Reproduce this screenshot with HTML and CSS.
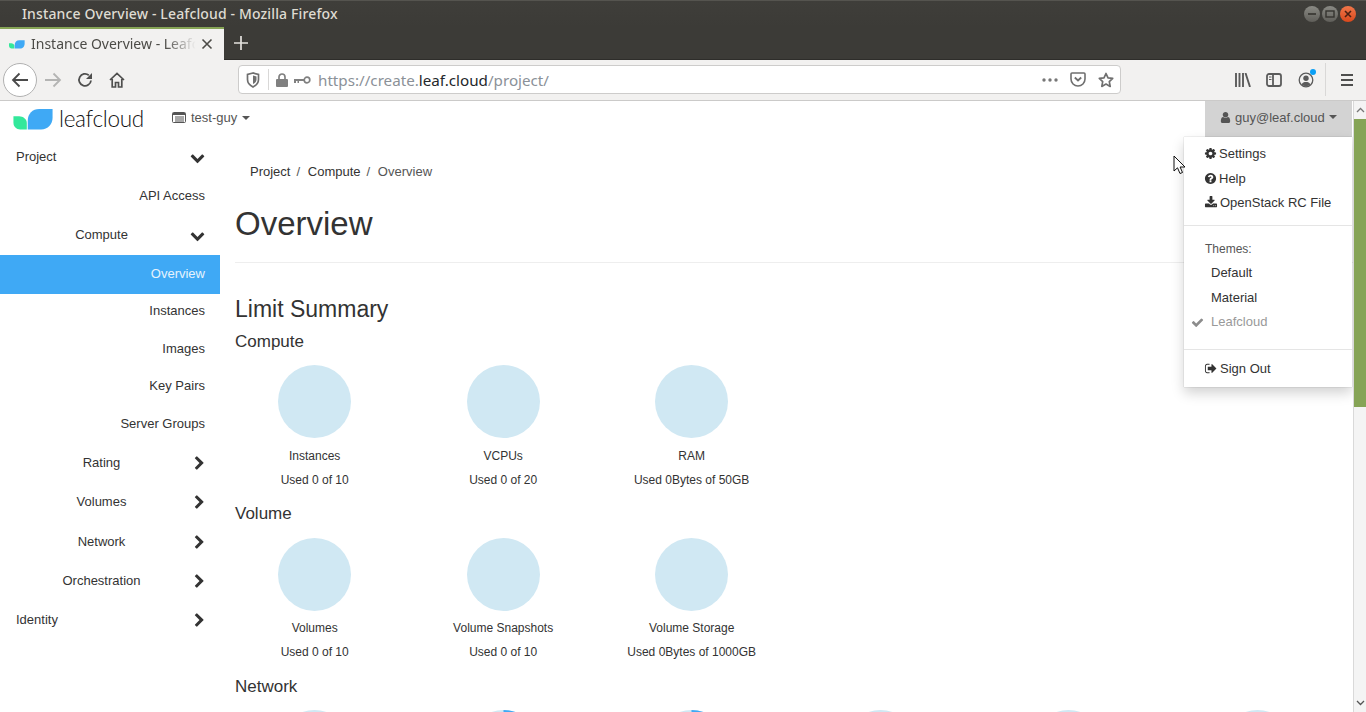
FILE: index.html
```html
<!DOCTYPE html>
<html lang="en">
<head>
<meta charset="utf-8">
<title>Instance Overview - Leafcloud - Mozilla Firefox</title>
<link rel="stylesheet" href="styles.css">
</head>
<body>
<svg class="defs" width="0" height="0">
  <defs>
    <symbol id="i-down" viewBox="0 0 1792 1792"><path d="M1683 808l-742 741q-19 19-45 19t-45-19l-742-741q-19-19-19-45.5t19-45.5l166-165q19-19 45-19t45 19l531 531 531-531q19-19 45-19t45 19l166 165q19 19 19 45.5t-19 45.5z"/></symbol>
    <symbol id="i-right" viewBox="0 0 1792 1792"><path d="M1363 877l-742 742q-19 19-45 19t-45-19l-166-166q-19-19-19-45t19-45l531-531-531-531q-19-19-19-45t19-45l166-166q19-19 45-19t45 19l742 742q19 19 19 45t-19 45z"/></symbol>
    <symbol id="i-user" viewBox="0 0 1792 1792"><path d="M1536 1399q0 109-62.5 187t-150.5 78h-854q-88 0-150.5-78t-62.5-187q0-85 8.5-160.5t31.5-152 58.5-131 94-89 134.5-34.5q131 128 313 128t313-128q76 0 134.5 34.5t94 89 58.5 131 31.5 152 8.5 160.5zm-256-887q0 159-112.5 271.5t-271.5 112.5-271.5-112.5-112.5-271.5 112.5-271.5 271.5-112.5 271.5 112.5 112.5 271.5z"/></symbol>
    <symbol id="i-check" viewBox="0 0 1792 1792"><path d="M1671 566q0 40-28 68l-724 724-136 136q-28 28-68 28t-68-28l-136-136-362-362q-28-28-28-68t28-68l136-136q28-28 68-28t68 28l294 295 656-657q28-28 68-28t68 28l136 136q28 28 28 68z"/></symbol>
    <symbol id="i-help" viewBox="0 0 1792 1792"><path d="M1024 1376v-192q0-14-9-23t-23-9h-192q-14 0-23 9t-9 23v192q0 14 9 23t23 9h192q14 0 23-9t9-23zm256-672q0-88-55.5-163t-138.5-116-170-41q-243 0-371 213-15 24 8 42l132 100q7 6 19 6 16 0 25-12 53-68 86-92 34-24 86-24 48 0 85.5 26t37.5 59q0 38-20 61t-68 45q-63 28-115.5 86.5t-52.5 125.5v36q0 14 9 23t23 9h192q14 0 23-9t9-23q0-19 21.5-49.5t54.5-49.5q32-18 49-28.5t46-35 44.5-48 28-60.5 12.5-81zm384 192q0 209-103 385.5t-279.5 279.5-385.5 103-385.5-103-279.5-279.5-103-385.5 103-385.5 279.5-279.5 385.5-103 385.5 103 279.5 279.5 103 385.5z"/></symbol>
    <symbol id="i-cog" viewBox="0 0 1792 1792"><path d="M1152 896q0-106-75-181t-181-75-181 75-75 181 75 181 181 75 181-75 75-181zm512-109v222q0 12-8 23t-20 13l-185 28q-19 54-39 91 35 50 107 138 10 12 10 25t-9 23q-27 37-99 108t-94 71q-12 0-26-9l-138-108q-44 23-91 38-16 136-29 186-7 28-36 28h-222q-14 0-24.5-8.5t-11.5-21.5l-28-184q-49-16-90-37l-141 107q-10 9-25 9-14 0-25-11-126-114-165-168-7-10-7-23 0-12 8-23 15-21 51-66.5t54-70.5q-27-50-41-99l-183-27q-13-2-21-12.5t-8-23.5v-222q0-12 8-23t19-13l186-28q14-46 39-92-40-57-107-138-10-12-10-24 0-10 9-23 26-36 98.5-107.5t94.5-71.5q13 0 26 10l138 107q44-23 91-38 16-136 29-186 7-28 36-28h222q14 0 24.5 8.5t11.5 21.5l28 184q49 16 90 37l142-107q9-9 24-9 13 0 25 10 129 119 165 170 7 8 7 22 0 12-8 23-15 21-51 66.5t-54 70.5q26 50 41 98l183 28q13 2 21 12.5t8 23.5z"/></symbol>
    <symbol id="i-download" viewBox="0 0 1792 1792"><path d="M1344 1344q0-26-19-45t-45-19-45 19-19 45 19 45 45 19 45-19 19-45zm256 0q0-26-19-45t-45-19-45 19-19 45 19 45 45 19 45-19 19-45zm128-224v320q0 40-28 68t-68 28h-1472q-40 0-68-28t-28-68v-320q0-40 28-68t68-28h465l135 136q58 56 136 56t136-56l136-136h464q40 0 68 28t28 68zm-325-569q17 41-14 70l-448 448q-18 19-45 19t-45-19l-448-448q-31-29-14-70 17-39 59-39h256v-448q0-26 19-45t45-19h256q26 0 45 19t19 45v448h256q42 0 59 39z"/></symbol>
    <symbol id="i-signout" viewBox="0 0 1792 1792"><path d="M704 1440q0 4 1 20t.5 26.5-3 23.5-10 19.5-20.5 6.5h-320q-119 0-203.5-84.5t-84.5-203.5v-704q0-119 84.5-203.5t203.5-84.5h320q13 0 22.5 9.5t9.5 22.5q0 4 1 20t.5 26.5-3 23.5-10 19.5-20.5 6.5h-320q-66 0-113 47t-47 113v704q0 66 47 113t113 47h312l11.5 1 11.5 3 8 5.5 7 9 2 13.5zm928-544q0 26-19 45l-544 544q-19 19-45 19t-45-19-19-45v-288h-448q-26 0-45-19t-19-45v-384q0-26 19-45t45-19h448v-288q0-26 19-45t45-19 45 19l544 544q19 19 19 45z"/></symbol>
    <symbol id="i-leaf" viewBox="0 0 42 22"><path fill="#33e89b" d="M0 7.500h6c4 0 8 3 8 7v7H7c-4 0-7-3-7-7z"/><path fill="#3fa9f5" d="M15 21.500V12C15 5 20 0 27 0h14v9c0 7-5 12.500-12 12.500z"/></symbol>
  </defs>
</svg>

<header class="titlebar">
  <span class="title-text">Instance Overview - Leafcloud - Mozilla Firefox</span>
  <div class="winbtns">
    <span class="winbtn"><svg width="16" height="16" viewBox="0 0 16 16"><path d="M4 8h8" stroke="#35342f" stroke-width="1.6"/></svg></span>
    <span class="winbtn"><svg width="16" height="16" viewBox="0 0 16 16"><rect x="4" y="5" width="8" height="6" fill="none" stroke="#35342f" stroke-width="1.4"/></svg></span>
    <span class="winbtn winbtn-close"><svg width="16" height="16" viewBox="0 0 16 16"><path d="M5 5l6 6M11 5l-6 6" stroke="#4a2013" stroke-width="1.6"/></svg></span>
  </div>
</header>

<div class="tabbar">
  <div class="tab">
    <svg class="tab-icon" width="16" height="9"><use href="#i-leaf"/></svg>
    <span class="tab-label">Instance Overview - Leafc</span>
    <svg class="tab-close" width="12" height="12" viewBox="0 0 12 12"><path d="M1.5 1.5l9 9M10.5 1.5l-9 9" stroke="#4c4b47" stroke-width="1.6"/></svg>
  </div>
  <svg class="newtab" width="14" height="14" viewBox="0 0 14 14"><path d="M7 0v14M0 7h14" stroke="#e4e2dd" stroke-width="1.7"/></svg>
</div>

<div class="toolbar">
  <span class="backbtn"><svg width="18" height="16" viewBox="0 0 18 16"><path d="M8.5 1.5L2 8l6.500 6.500M2 8h15" fill="none" stroke="#4a4a4a" stroke-width="1.800"/></svg></span>
  <svg class="tb-fwd" width="18" height="16" viewBox="0 0 18 16"><path d="M9.500 1.500L16 8l-6.500 6.500M16 8H1" fill="none" stroke="#b4b4b3" stroke-width="1.800"/></svg>
  <svg class="tb-reload" width="16" height="16" viewBox="0 0 16 16"><path d="M14 8.500A6 6 0 1 1 11.800 3.200" fill="none" stroke="#4f4f4e" stroke-width="1.800"/><path d="M15 1v6H9z" fill="#4f4f4e"/></svg>
  <svg class="tb-home" width="16" height="16" viewBox="0 0 16 16"><path d="M1 8l7-6.500L15 8M3.200 7v8h3.300v-4.500h3V15h3.300V7" fill="none" stroke="#4f4f4e" stroke-width="1.700"/></svg>
  <div class="urlbar">
    <svg class="ub-shield" width="14" height="16" viewBox="0 0 14 16"><path d="M7 1L1.500 2.500v5c0 3.500 2.500 6 5.500 7.500 3-1.500 5.500-4 5.500-7.500v-5z" fill="none" stroke="#6f6f6f" stroke-width="1.700"/><path d="M7 3.500l3.500 1v3c0 2-1.500 3.500-3.500 4.500z" fill="#6f6f6f"/></svg>
    <span class="ub-sep"></span>
    <svg class="ub-lock" width="12" height="14" viewBox="0 0 12 14"><path d="M3 6V4a3 3 0 0 1 6 0v2" fill="none" stroke="#808080" stroke-width="1.700"/><rect x="0" y="6" width="12" height="8" rx="1" fill="#808080"/></svg>
    <svg class="ub-key" width="17" height="8" viewBox="0 0 17 8"><circle cx="13" cy="4" r="2.800" fill="none" stroke="#808080" stroke-width="1.700"/><path d="M0 3h10v2H5v2H3.500V5H2v2H0z" fill="#808080"/></svg>
    <span class="url"><span class="url-dim">https://create.</span><span class="url-host">leaf.cloud</span><span class="url-dim">/project/</span></span>
    <svg class="ub-dots" width="16" height="4" viewBox="0 0 16 4"><circle cx="2" cy="2" r="1.700"/><circle cx="8" cy="2" r="1.700"/><circle cx="14" cy="2" r="1.700"/></svg>
    <svg class="ub-pocket" width="16" height="15" viewBox="0 0 16 15"><path d="M2 1h12a1 1 0 0 1 1 1v5a7 7 0 0 1-14 0V2a1 1 0 0 1 1-1z" fill="none" stroke="#6f6f6f" stroke-width="1.600"/><path d="M4.800 5.500L8 8.500l3.200-3" fill="none" stroke="#6f6f6f" stroke-width="1.800"/></svg>
    <svg class="ub-star" width="16" height="16" viewBox="0 0 16 16"><path d="M8 1.500l2 4.300 4.700.6-3.400 3.300.9 4.700L8 12.100l-4.200 2.300.9-4.700L1.300 6.400 6 5.800z" fill="none" stroke="#6f6f6f" stroke-width="1.700" stroke-linejoin="round"/></svg>
  </div>
  <svg class="tb-lib" width="16" height="14" viewBox="0 0 16 14"><path d="M1 0v14M4.500 0v14M8 0v14M10.500 0l4.500 14" stroke="#5b5b5b" stroke-width="1.900" fill="none"/></svg>
  <svg class="tb-side" width="16" height="14" viewBox="0 0 16 14"><rect x="1" y="1" width="14" height="12" rx="2" fill="none" stroke="#5b5b5b" stroke-width="1.800"/><path d="M7 1v12" stroke="#5b5b5b" stroke-width="1.800"/><path d="M3 4h2.500M3 6.500h2.500" stroke="#5b5b5b" stroke-width="1.200"/></svg>
  <span class="tb-acct">
    <svg width="16" height="16" viewBox="0 0 16 16"><circle cx="8" cy="8" r="6.800" fill="none" stroke="#5b5b5b" stroke-width="1.300"/><circle cx="8" cy="6.300" r="2.700" fill="#5b5b5b"/><path d="M3.600 12.500C4.500 10.500 6 10 8 10s3.500.5 4.400 2.500a6.500 6.500 0 0 1-8.800 0z" fill="#5b5b5b"/></svg>
    <i class="acct-dot"></i>
  </span>
  <span class="tb-sep"></span>
  <svg class="tb-menu" width="14" height="12" viewBox="0 0 14 12"><path d="M1 1h12M1 6h12M1 11h12" stroke="#4f4f4e" stroke-width="1.900"/></svg>
</div>

<div class="viewport">
  <div class="page">
    <nav class="topnav">
      <a class="brand"><svg class="brand-mark" width="41" height="21"><use href="#i-leaf"/></svg><span class="brand-text">leafcloud</span></a>
      <a class="picker">
        <svg class="picker-icon" width="14" height="11" viewBox="0 0 14 11"><rect x=".5" y=".5" width="13" height="10" rx="1" fill="none" stroke="#555"/><path d="M1 1h12v2H1zM3 4.500h9v1H3zM3 6.500h9v1H3zM3 8.500h9v1H3z" fill="#555"/></svg>
        test-guy<i class="caret"></i>
      </a>
      <a class="userbtn"><svg class="fa fa-user" width="13" height="13"><use href="#i-user"/></svg>guy@leaf.cloud<i class="caret"></i></a>
    </nav>

    <div class="columns">
      <aside class="sidebar">
        <div class="nav-row nav-top"><span class="nav-label">Project</span><svg class="chev" width="15" height="15"><use href="#i-down"/></svg></div>
        <div class="nav-row nav-leaf">API Access</div>
        <div class="nav-row nav-mid"><span class="nav-label">Compute</span><svg class="chev" width="15" height="15"><use href="#i-down"/></svg></div>
        <div class="nav-sub nav-active">Overview</div>
        <div class="nav-sub">Instances</div>
        <div class="nav-sub">Images</div>
        <div class="nav-sub">Key Pairs</div>
        <div class="nav-sub">Server Groups</div>
        <div class="nav-row nav-mid nav-after-sub"><span class="nav-label">Rating</span><svg class="chev chev-right" width="15" height="15"><use href="#i-right"/></svg></div>
        <div class="nav-row nav-mid"><span class="nav-label">Volumes</span><svg class="chev chev-right" width="15" height="15"><use href="#i-right"/></svg></div>
        <div class="nav-row nav-mid nav-gap"><span class="nav-label">Network</span><svg class="chev chev-right" width="15" height="15"><use href="#i-right"/></svg></div>
        <div class="nav-row nav-mid"><span class="nav-label">Orchestration</span><svg class="chev chev-right" width="15" height="15"><use href="#i-right"/></svg></div>
        <div class="nav-row nav-top"><span class="nav-label">Identity</span><svg class="chev chev-right" width="15" height="15"><use href="#i-right"/></svg></div>
      </aside>

      <main class="main">
        <ol class="crumbs"><li>Project</li><li>Compute</li><li class="crumb-now">Overview</li></ol>
        <h1 class="page-title">Overview</h1>
        <hr class="rule">
        <h2 class="limit-title">Limit Summary</h2>
        <h3 class="group-title">Compute</h3>
        <div class="charts">
          <div class="chart"><svg width="73" height="73"><circle cx="36.500" cy="36.500" r="36.500"/></svg><div class="chart-name">Instances</div><div class="chart-used">Used 0 of 10</div></div>
          <div class="chart"><svg width="73" height="73"><circle cx="36.500" cy="36.500" r="36.500"/></svg><div class="chart-name">VCPUs</div><div class="chart-used">Used 0 of 20</div></div>
          <div class="chart"><svg width="73" height="73"><circle cx="36.500" cy="36.500" r="36.500"/></svg><div class="chart-name">RAM</div><div class="chart-used">Used 0Bytes of 50GB</div></div>
        </div>
        <h3 class="group-title group-next">Volume</h3>
        <div class="charts charts-tight">
          <div class="chart"><svg width="73" height="73"><circle cx="36.500" cy="36.500" r="36.500"/></svg><div class="chart-name">Volumes</div><div class="chart-used">Used 0 of 10</div></div>
          <div class="chart"><svg width="73" height="73"><circle cx="36.500" cy="36.500" r="36.500"/></svg><div class="chart-name">Volume Snapshots</div><div class="chart-used">Used 0 of 10</div></div>
          <div class="chart"><svg width="73" height="73"><circle cx="36.500" cy="36.500" r="36.500"/></svg><div class="chart-name">Volume Storage</div><div class="chart-used">Used 0Bytes of 1000GB</div></div>
        </div>
        <h3 class="group-title group-next group-net">Network</h3>
        <div class="charts charts-last">
          <div class="chart"><svg width="73" height="73"><circle cx="36.500" cy="36.500" r="36.500"/></svg></div>
          <div class="chart"><svg width="73" height="73"><circle cx="36.500" cy="36.500" r="36.500"/><path class="wedge" d="M36.500 36.500V0A36.500 36.500 0 0 1 73 36.500z"/></svg></div>
          <div class="chart"><svg width="73" height="73"><circle cx="36.500" cy="36.500" r="36.500"/><path class="wedge" d="M36.500 36.500V0A36.500 36.500 0 0 1 73 36.500z"/></svg></div>
          <div class="chart"><svg width="73" height="73"><circle cx="36.500" cy="36.500" r="36.500"/></svg></div>
          <div class="chart"><svg width="73" height="73"><circle cx="36.500" cy="36.500" r="36.500"/></svg></div>
          <div class="chart"><svg width="73" height="73"><circle cx="36.500" cy="36.500" r="36.500"/></svg></div>
        </div>
      </main>
    </div>

    <div class="usermenu">
      <div class="menu-group menu-first">
        <div class="menu-item"><svg class="fa" width="13" height="13"><use href="#i-cog"/></svg>Settings</div>
        <div class="menu-item"><svg class="fa" width="13" height="13"><use href="#i-help"/></svg>Help</div>
        <div class="menu-item"><svg class="fa fa-wide" width="14" height="13"><use href="#i-download"/></svg>OpenStack RC File</div>
      </div>
      <div class="menu-group menu-themes">
        <div class="menu-head">Themes:</div>
        <div class="menu-theme">Default</div>
        <div class="menu-theme">Material</div>
        <div class="menu-theme menu-current"><svg class="menu-check" width="13" height="13"><use href="#i-check"/></svg>Leafcloud</div>
      </div>
      <div class="menu-group menu-last">
        <div class="menu-item"><svg class="fa fa-wide" width="14" height="13"><use href="#i-signout"/></svg>Sign Out</div>
      </div>
    </div>

    <svg class="cursor" width="13" height="20" viewBox="0 0 13 20"><path d="M1 1v15l3.500-3.200L7 18.500l2.500-1-2.400-5.500H12z" fill="#fff" stroke="#111" stroke-width="1"/></svg>
  </div>

  <div class="scrollbar">
    <svg class="sb-arrow" width="9" height="6" viewBox="0 0 9 6"><path d="M1 5l3.500-3.500L8 5" fill="none" stroke="#777" stroke-width="1.300"/></svg>
    <div class="sb-thumb"></div>
    <svg class="sb-arrow sb-down" width="9" height="6" viewBox="0 0 9 6"><path d="M1 1l3.500 3.500L8 1" fill="none" stroke="#555" stroke-width="1.300"/></svg>
  </div>
</div>
</body>
</html>
```

FILE: styles.css
```css
* { box-sizing: border-box; }
html, body { margin: 0; padding: 0; height: 712px; width: 1366px; overflow: hidden; }
body { display: flex; flex-direction: column; background: #fff; font-family: "Liberation Sans", Arial, sans-serif; color: #333; }
.defs { position: absolute; }

/* Window chrome */
.titlebar { height: 27px; flex: none; display: flex; align-items: center; padding: 0 10px 0 22px; background: linear-gradient(#3f3e3a, #3c3b37); border-top: 1px solid #55544f; }
.title-text { flex: 1; font: 500 14px "Noto Sans", sans-serif; color: #dfdbd2; letter-spacing: .14px; margin-bottom: 2px; }
.winbtns { display: flex; gap: 2px; }
.winbtn { width: 16px; height: 16px; border-radius: 50%; background: linear-gradient(#8a8a84, #5f5e59); display: block; }
.winbtn svg { display: block; }
.winbtn-close { background: linear-gradient(#f0774a, #d9481c); }

.tabbar { height: 33px; flex: none; display: flex; align-items: center; background: #3c3b37; border-bottom: 1px solid #2e2d2a; }
.tab { width: 224px; height: 33px; flex: none; display: flex; align-items: center; background: #f2f1f0; border-top: 2px solid #86a456; padding: 0 11px 0 9px; }
.tab-icon { flex: none; margin-right: 6px; }
.tab-label { flex: 1; white-space: nowrap; margin-bottom: 2px; font: 14px "Noto Sans", sans-serif; color: #4c4b47; -webkit-mask-image: linear-gradient(to right, #000 80%, transparent 98%); mask-image: linear-gradient(to right, #000 80%, transparent 98%); }
.tab-close { flex: none; margin-left: 2px; }
.newtab { margin-left: 10px; }

.toolbar { height: 41px; flex: none; display: flex; align-items: center; background: #f2f1f0; border-bottom: 1px solid #cbcac9; padding: 0 0 1px 3px; }
.backbtn { width: 34px; height: 34px; flex: none; border-radius: 50%; background: #fff; border: 1px solid #b1b1b1; display: flex; align-items: center; justify-content: center; }
.tb-fwd { margin-left: 7px; flex: none; }
.tb-reload { margin-left: 15px; flex: none; }
.tb-home { margin-left: 16px; flex: none; }
.urlbar { width: 883px; height: 29px; flex: none; margin-left: 113px; display: flex; align-items: center; background: #fff; border: 1px solid #cdcccb; border-radius: 4px; padding: 0 6px 0 7px; }
.ub-shield { flex: none; }
.ub-sep { width: 1px; height: 21px; background: #d9d8d7; margin: 0 7px 0 8px; flex: none; }
.ub-lock { flex: none; }
.ub-key { flex: none; margin-left: 6px; }
.url { flex: 1; margin-left: 7px; font: 15.200px "Noto Sans", sans-serif; white-space: nowrap; }
.url-dim { color: #8b9198; }
.url-host { color: #24272b; }
.ub-dots { fill: #777; flex: none; margin-right: 12px; }
.ub-pocket { flex: none; margin-right: 12px; }
.ub-star { flex: none; }
.tb-lib { margin-left: 114px; flex: none; }
.tb-side { margin-left: 15px; flex: none; }
.tb-acct { margin-left: 16px; width: 16px; height: 16px; flex: none; position: relative; display: block; }
.tb-acct svg { display: block; }
.acct-dot { position: absolute; top: -3px; right: -2px; width: 6px; height: 6px; border-radius: 50%; background: #0a9ff5; }
.tb-sep { width: 1px; height: 33px; background: #d9d8d7; margin-left: 11px; flex: none; }
.tb-menu { margin-left: 14px; flex: none; }

/* Page */
.viewport { flex: 1; min-height: 0; display: flex; }
.page { width: 1353px; flex: none; overflow: hidden; position: relative; font-size: 13px; }
.topnav { height: 36px; display: flex; align-items: center; padding-left: 13px; }
.brand { display: flex; align-items: center; width: 159px; flex: none; }
.brand-mark { flex: none; margin-right: 5px; }
.brand-text { font: 300 22.500px Lato, sans-serif; color: #111; letter-spacing: -.3px; line-height: 1; }
.picker { display: flex; align-items: center; color: #555; margin-top: -3px; }
.picker-icon { margin-right: 5px; }
.caret { display: inline-block; width: 0; height: 0; border-top: 4px solid currentColor; border-left: 4px solid transparent; border-right: 4px solid transparent; margin-left: 5px; }
.userbtn { margin-left: auto; margin-right: 1px; width: 147px; height: 36px; display: flex; align-items: center; padding: 0 0 4px 14px; background: #d3d3d3; color: #555; }
.userbtn .caret { margin-left: 4px; }
.fa { fill: currentColor; flex: none; margin-right: 2px; }
.fa-user { margin-right: 3px; }

.columns { display: flex; }
.sidebar { width: 220px; flex: none; color: #333; }
.nav-row { height: 39px; display: flex; align-items: center; padding: 0 15px 0 13px; }
.nav-label { flex: 1; text-align: center; }
.nav-top .nav-label { text-align: left; padding-left: 3px; }
.nav-leaf { justify-content: flex-end; }
.chev { fill: #333; flex: none; margin-top: 2px; }
.chev-right { margin: 2px -2px 0 2px; }
.nav-after-sub { margin-top: -1px; }
.nav-gap { margin-top: 1px; }
.nav-sub { height: 37.500px; display: flex; align-items: center; justify-content: flex-end; padding: 0 15px 4px 0; }
.nav-active { height: 39px; margin-top: 1px; padding-bottom: 2px; background: #3fa9f5; color: #e6f3fd; }

.main { flex: 1; min-width: 0; padding-left: 15px; }
.crumbs { list-style: none; margin: 0; padding: 28px 0 0 15px; display: flex; line-height: 14px; color: #333; }
.crumbs li + li::before { content: "/"; padding: 0 7.700px 0 6px; color: #555; }
.crumb-now { color: #555; }
.page-title { margin: 26px 0 0; font-weight: 400; font-size: 33px; line-height: 38px; color: #333; }
.rule { border: 0; border-top: 1px solid #eee; margin: 19px 0 0; }
.limit-title { margin: 32px 0 0; font-weight: 400; font-size: 23px; line-height: 28px; color: #333; }
.group-title { margin: 9px 0 0; font-weight: 400; font-size: 17px; line-height: 20px; color: #333; }
.group-next { margin-top: 17px; }
.group-net { margin-top: 18px; }
.charts { display: flex; margin: 13px 0 0 -14.600px; }
.charts-tight { margin-top: 14px; }
.charts-last { margin-top: 13px; }
.chart { width: 188.500px; flex: none; display: flex; flex-direction: column; align-items: center; font-size: 12px; line-height: 14px; }
.chart svg { display: block; }
.chart circle { fill: #d0e8f3; }
.wedge { fill: #3fa9f5; }
.chart-name { margin-top: 11px; }
.chart-used { margin-top: 10px; }
.charts-tight .chart-name { margin-top: 10px; }

/* Dropdown */
.usermenu { position: absolute; left: 1184px; top: 36px; width: 168px; height: 250px; background: #fff; box-shadow: 0 0 1px rgba(0,0,0,.3), 0 6px 12px rgba(0,0,0,.18); }
.menu-group { border-bottom: 1px solid #e5e5e5; }
.menu-first { padding: 4.400px 0 10.100px; }
.menu-themes { padding: 9.800px 0 15.200px; }
.menu-group.menu-last { border-bottom: 0; padding-top: 6.500px; }
.menu-item { height: 24.500px; display: flex; align-items: center; padding-left: 20px; color: #333; white-space: nowrap; }
.menu-head { height: 24.500px; display: flex; align-items: center; padding: 2px 0 0 21px; font-size: 12px; color: #555; }
.menu-theme { height: 24.500px; display: flex; align-items: center; padding-left: 27px; color: #333; position: relative; }
.menu-current { color: #999; }
.menu-check { position: absolute; left: 7px; top: 7px; fill: #8c8c8c; }
.cursor { position: absolute; left: 1173px; top: 54px; }

/* Scrollbar */
.scrollbar { flex: 1; min-width: 0; display: flex; flex-direction: column; align-items: center; background: #f4f4f4; border-left: 1px solid #d9d9d9; position: relative; }
.sb-arrow { flex: none; margin-top: 6px; }
.sb-thumb { width: 100%; height: 288px; background: #86a456; margin-top: 6px; }
.sb-down { margin-top: auto; margin-bottom: 6px; }
```
